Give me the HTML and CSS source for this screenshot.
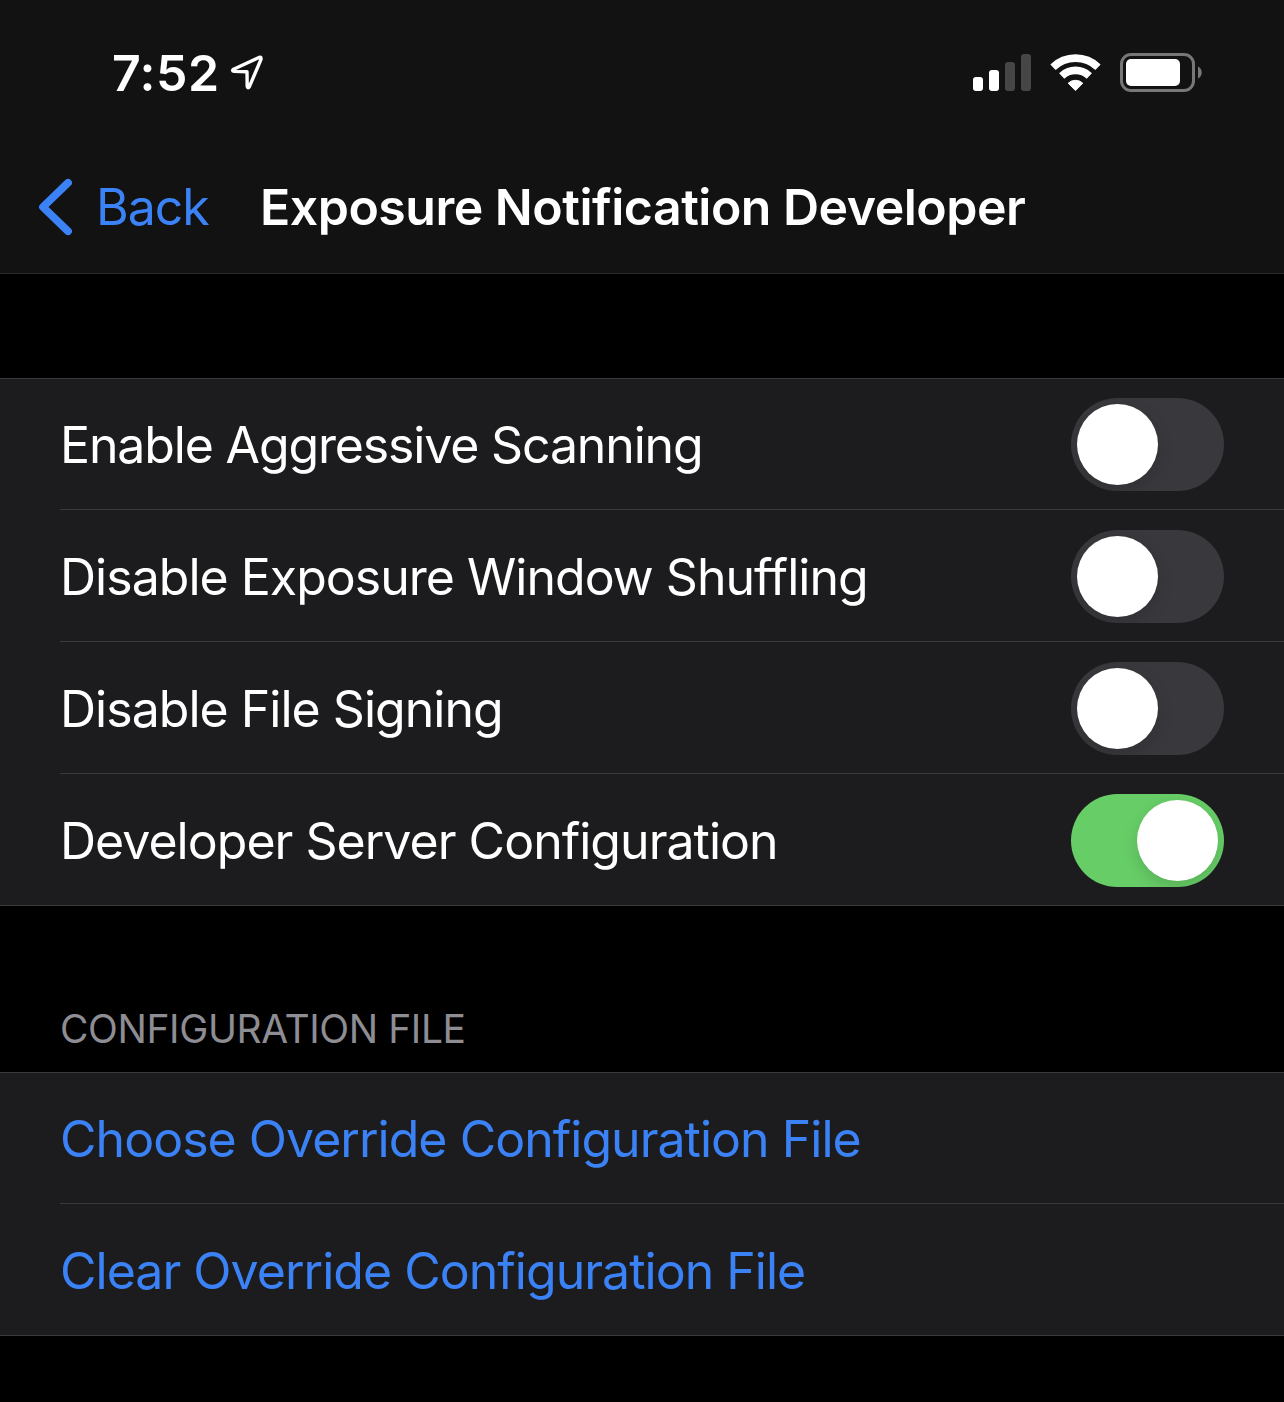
FILE: index.html
```html
<!DOCTYPE html>
<html lang="en">
<head>
<meta charset="utf-8">
<title>Exposure Notification Developer</title>
<link rel="stylesheet" href="styles.css">
</head>
<body>
<header class="top">
  <div class="status">
    <div class="clock">
      <span class="time">7:52</span>
      <svg class="location" width="36" height="38" viewBox="0 0 36 38"><path d="M31 5.2Q31 3.6 29.4 4.3L3.6 16.2Q1.4 17.8 4 18.4L17 18.8 17.2 33.4Q18 36 19.4 33.6L31 6.4Z" fill="none" stroke="#fff" stroke-width="3.4" stroke-linejoin="round"/></svg>
    </div>
    <div class="indicators">
      <svg width="58" height="38" viewBox="0 0 58 38"><g fill="#fff"><rect y="23" width="10" height="14" rx="3"/><rect x="16" y="16" width="10" height="21" rx="3"/></g><g fill="#464646"><rect x="32" y="8" width="10" height="29" rx="3"/><rect x="48" width="10" height="37" rx="3"/></g></svg>
      <svg class="wifi" width="52" height="38" viewBox="0 0 52 38"><g fill="none" stroke="#fff" stroke-width="7.6"><path d="M3 13.2a32.5 32.5 0 0 1 45 0"/><path d="M11.7 21.9a20 20 0 0 1 27.6 0"/></g><path d="M18.2 29.2a10.6 10.6 0 0 1 14.6 0L25.5 36.6Z" fill="#fff" stroke="#fff" stroke-width="1" stroke-linejoin="round"/></svg>
      <svg class="battery" width="83" height="39" viewBox="0 0 83 39"><rect x="1.5" y="1.5" width="72" height="36" rx="9.5" fill="none" stroke="#77777a" stroke-width="3"/><rect x="6" y="6" width="54" height="27" rx="5" fill="#fff"/><path d="M78 13.5c5 2 5 10 0 12Z" fill="#77777a"/></svg>
    </div>
  </div>
  <nav class="nav">
    <svg class="chevron" width="34" height="58" viewBox="0 0 34 58"><path d="M30 4.8 5 29 30 53.2" fill="none" stroke="#3b82f6" stroke-width="7.8" stroke-linecap="round" stroke-linejoin="round"/></svg>
    <a class="back">Back</a>
    <h1 class="title">Exposure Notification Developer</h1>
  </nav>
</header>
<main>
  <section class="group switches">
    <div class="row"><span class="label tight">Enable Aggressive Scanning</span><span class="switch"></span></div>
    <div class="row"><span class="label">Disable Exposure Window Shuffling</span><span class="switch"></span></div>
    <div class="row"><span class="label">Disable File Signing</span><span class="switch"></span></div>
    <div class="row"><span class="label">Developer Server Configuration</span><span class="switch on"></span></div>
  </section>
  <h2 class="heading">CONFIGURATION FILE</h2>
  <section class="group">
    <div class="row"><a class="label link">Choose Override Configuration File</a></div>
    <div class="row"><a class="label link">Clear Override Configuration File</a></div>
  </section>
</main>
</body>
</html>
```
FILE: styles.css
```css
* { box-sizing: border-box; }
body { margin: 0; min-height: 1402px; background: #000; color: #fff; font-family: Inter, "Liberation Sans", sans-serif; font-size: 50px; line-height: 60px; font-variant-ligatures: none; }
.top { height: 274px; background: #121212; border-bottom: 1px solid #2a2a2b; }
.status { height: 142px; padding: 43px 81px 0 112px; display: flex; justify-content: space-between; }
.clock, .indicators { display: flex; align-items: flex-start; }
.time { font-weight: 600; width: 118px; letter-spacing: .5px; }
.location { margin-top: 10px; }
.indicators { padding-top: 11px; }
.wifi { margin-left: 19px; }
.battery { margin: -1px 0 0 18px; }
.nav { display: flex; align-items: center; height: 129px; padding-left: 38px; }
.chevron { flex: none; }
.back { width: 164px; margin-left: 24px; color: #3b82f6; letter-spacing: -1px; }
.title { margin: 0; font-size: 50px; font-weight: 600; white-space: nowrap; letter-spacing: -.5px; }
.group { border-top: 1px solid #39393b; border-bottom: 1px solid #39393b; background: #1c1c1e; padding-left: 60px; }
.switches { margin-top: 104px; }
.row { height: 132px; display: flex; align-items: center; justify-content: space-between; padding: 1px 60px 0 0; border-bottom: 1px solid #39393b; }
.row:first-child { height: 131px; }
.row:last-child { height: 131px; border-bottom: 0; }
.label { white-space: nowrap; letter-spacing: -.98px; }
.tight { letter-spacing: -1.15px; }
.row + .row .label { padding-top: 2px; }
.link { color: #3b82f6; }
.switch { width: 153px; height: 93px; border-radius: 47px; padding: 6px; background: #39393d; display: flex; overflow: hidden; }
.switch::after { content: ""; width: 81px; height: 81px; border-radius: 50%; background: #fff; box-shadow: 0 6px 16px rgba(0,0,0,.15); }
.switch.on { background: #67ce67; justify-content: flex-end; }
.heading { margin: 0; height: 166px; padding: 99px 0 0 60px; color: #8d8d93; font-size: 39px; line-height: 48px; font-weight: 400; letter-spacing: -.4px; }
```
